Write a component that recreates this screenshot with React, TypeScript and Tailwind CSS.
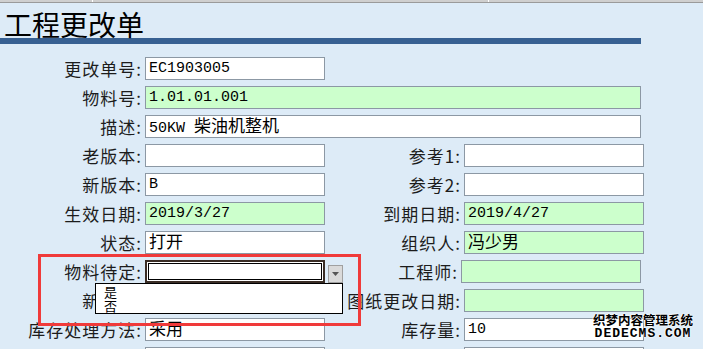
import React from 'react';

const labelFont = "font-['Noto_Sans_CJK_SC',sans-serif]";

interface FieldProps {
  value?: React.ReactNode;
  green?: boolean;
  wide?: boolean;
}

const Field: React.FC<FieldProps> = ({ value = '', green, wide }) => (
  <div
    className={`h-[23px] ${wide ? 'w-[496px]' : 'w-[180px]'} border border-[#8c98a4] ${
      green ? 'bg-[#ccffcc]' : 'bg-white'
    } pl-[3px] flex items-center text-[15px] leading-[19px] text-black font-['Liberation_Mono','Noto_Sans_CJK_SC',monospace] whitespace-pre`}
  >
    <span>{value}</span>
  </div>
);

const Cjk: React.FC<{ children: React.ReactNode }> = ({ children }) => (
  <span className={`text-[17px] leading-none ${labelFont}`}>{children}</span>
);

const Label: React.FC<{ text: string; width: string }> = ({ text, width }) => (
  <div className={`${width} text-right text-[17px] tracking-[1px] leading-none text-[#1c1c1c] whitespace-nowrap ${labelFont}`}>
    {text}
  </div>
);

export default function App() {
  return (
    <div className="relative w-[703px] h-[349px] overflow-hidden bg-[#ddebf7]">
      {/* toolbar edge */}
      <div className="flex h-[3px] bg-[#cfcfcf] border-b border-[#9a9a9a]">
        <div className="w-[92px]" />
        <div className="w-[396px] border-l border-white" />
        <div className="flex-1 border-l border-white" />
      </div>

      <div className="pt-[8px] pl-[4px]">
        <h1 className={`text-[28px] leading-[27px] text-black ${labelFont}`}>工程更改单</h1>
      </div>
      <div className="h-[6px] w-[641px] bg-[#376092]" />

      <div className="mt-[13px] flex flex-col gap-[6px]">
        <div className="flex items-center gap-[3px]">
          <Label text="更改单号:" width="w-[142px]" />
          <Field value="EC1903005" />
        </div>
        <div className="flex items-center gap-[3px]">
          <Label text="物料号:" width="w-[142px]" />
          <Field value="1.01.01.001" green wide />
        </div>
        <div className="flex items-center gap-[3px]">
          <Label text="描述:" width="w-[142px]" />
          <Field value={<>{'50KW '}<Cjk>柴油机整机</Cjk></>} wide />
        </div>
        <div className="flex items-center gap-[3px]">
          <Label text="老版本:" width="w-[142px]" />
          <Field />
          <Label text="参考1:" width="w-[133px]" />
          <Field />
        </div>
        <div className="flex items-center gap-[3px]">
          <Label text="新版本:" width="w-[142px]" />
          <Field value="B" />
          <Label text="参考2:" width="w-[133px]" />
          <Field />
        </div>
        <div className="flex items-center gap-[3px]">
          <Label text="生效日期:" width="w-[142px]" />
          <Field value="2019/3/27" green />
          <Label text="到期日期:" width="w-[133px]" />
          <Field value="2019/4/27" green />
        </div>
        <div className="flex items-center gap-[3px]">
          <Label text="状态:" width="w-[142px]" />
          <Field value={<Cjk>打开</Cjk>} />
          <Label text="组织人:" width="w-[133px]" />
          <Field value={<Cjk>冯少男</Cjk>} green />
        </div>
        <div className="flex items-center gap-[3px]">
          <Label text="物料待定:" width="w-[142px]" />
          <div className="h-[23px] w-[180px] border-2 border-[#3a2d25] bg-white p-px">
            <div className="h-full w-full border border-black" />
          </div>
          <div className="h-[18px] w-[15px] mt-[4px] bg-[#dadada] border border-[#a0a0a0] flex items-center justify-center">
            <svg width="7" height="4" viewBox="0 0 7 4">
              <path d="M0 0h7L3.5 4z" fill="#555" />
            </svg>
          </div>
          <Label text="工程师:" width="w-[112px]" />
          <Field green />
        </div>
        <div className="flex items-center gap-[3px]">
          <Label text="新图号:" width="w-[142px]" />
          <Field />
          <Label text="图纸更改日期:" width="w-[133px]" />
          <Field green />
        </div>
        <div className="flex items-center gap-[3px]">
          <Label text="库存处理方法:" width="w-[142px]" />
          <Field value={<Cjk>采用</Cjk>} />
          <Label text="库存量:" width="w-[133px]" />
          <Field value="10" />
        </div>
        <div className="flex items-center gap-[3px]">
          <div className="w-[142px]" />
          <Field />
          <div className="w-[133px]" />
          <Field />
        </div>
      </div>

      {/* open dropdown list */}
      <div className={`absolute left-[95px] top-[283px] w-[248px] h-[31px] bg-white border border-black pl-[8px] pt-px text-[13px] leading-[14px] text-black ${labelFont}`}>
        <div>是</div>
        <div>否</div>
      </div>

      {/* annotation */}
      <div className="absolute left-[38px] top-[254px] w-[323px] h-[72px] border-[3px] border-[#f03a3a]" />

      {/* watermark */}
      <div className="absolute left-[592px] top-[313px] w-[102px] flex flex-col items-center text-black font-bold [text-shadow:0_0_2px_#fff,0_0_2px_#fff,0_0_1px_#fff]">
        <div className={`text-[12.5px] leading-[14px] ${labelFont}`}>织梦内容管理系统</div>
        <div className="mt-px text-[13px] leading-[11px] tracking-[1px] font-['Liberation_Mono',monospace]">DEDECMS.COM</div>
      </div>
    </div>
  );
}
